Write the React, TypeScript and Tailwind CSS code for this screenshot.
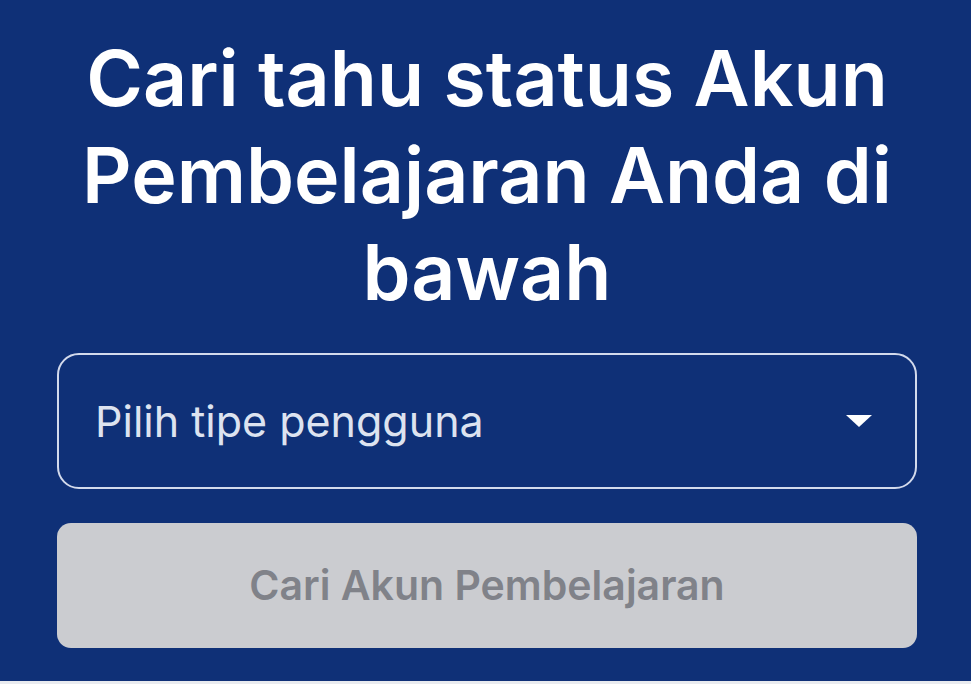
export default function App() {
  return (
    <div
      className="flex h-[684px] w-[971px] flex-col bg-[#e9ebef]"
      style={{ fontFamily: 'Inter, "Noto Sans", sans-serif' }}
    >
      <div className="flex h-[681px] flex-col items-center bg-[#0f3077] pl-[57px] pr-[54px] pt-[30px]">
        <h1 className="text-center text-[77px] font-semibold leading-[97px] text-white">
          Cari tahu status Akun Pembelajaran Anda di bawah
        </h1>

        <div className="mt-[32px] flex h-[136px] w-full items-center justify-between rounded-[22px] border-2 border-[#d3daec] pl-[36px] pr-[42px]">
          <span className="text-[43px] text-[#dde3f0]">Pilih tipe pengguna</span>
          <svg width="28" height="14" viewBox="0 0 28 14">
            <path d="M1 1 L27 1 L14 13 Z" fill="#ffffff" />
          </svg>
        </div>

        <button
          type="button"
          disabled
          className="mt-[34px] flex h-[125px] w-full items-center justify-center rounded-[14px] bg-[#cbccd0] text-[41px] font-semibold text-[#808289]"
        >
          Cari Akun Pembelajaran
        </button>
      </div>
    </div>
  )
}
